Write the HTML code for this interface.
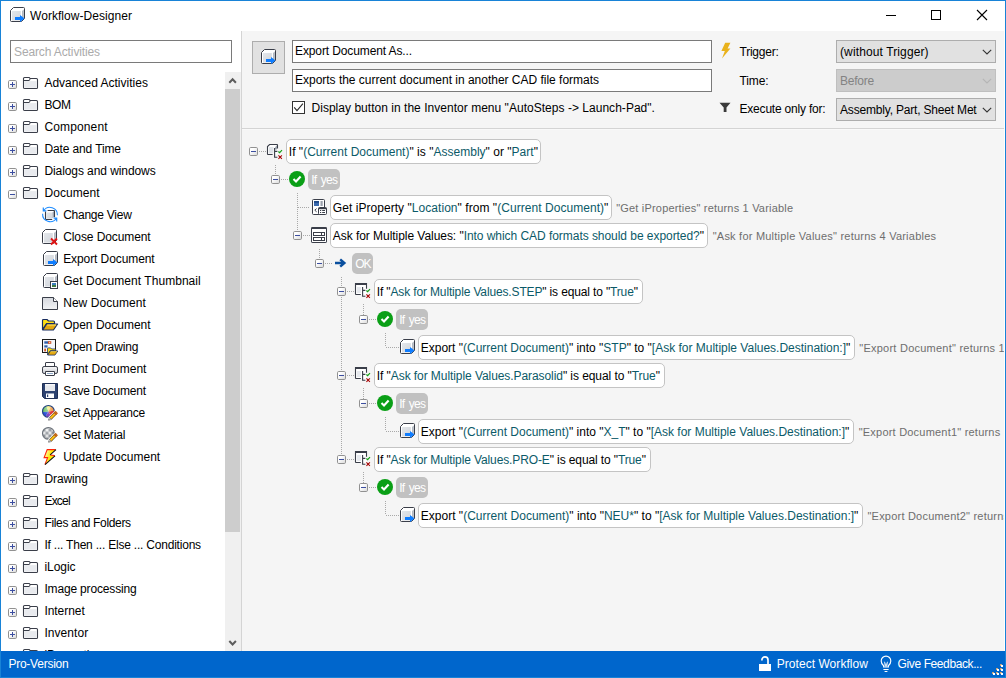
<!DOCTYPE html>
<html><head><meta charset="utf-8"><title>Workflow-Designer</title>
<style>
html,body{margin:0;padding:0}
body{width:1006px;height:678px;overflow:hidden;background:#fff;position:relative;font-family:"Liberation Sans",sans-serif;font-size:12px;color:#000}
.a{position:absolute}
.t{position:absolute;white-space:pre;line-height:16px;height:16px}
svg{position:absolute;overflow:visible}
.q{color:#0b5a68}
.box{position:absolute;height:23px;border:1px solid #c4c4c4;border-radius:5px;background:#fff}
.badge{position:absolute;height:21px;border-radius:5px;background:#c1c1c1}
.dh{position:absolute;height:1px;background-image:repeating-linear-gradient(90deg,#a9a9a9 0 1px,transparent 1px 2px)}
.dv{position:absolute;width:1px;background-image:repeating-linear-gradient(180deg,#a9a9a9 0 1px,transparent 1px 2px)}
.inp{position:absolute;height:21px;border:1px solid #7a7a7a;background:#fff}
.cmb{position:absolute;height:21px;width:158px;border:1px solid #adadad;background:#e1e1e1}
</style></head><body>
<svg width="0" height="0" style="left:0;top:0" aria-hidden="true"><defs><linearGradient id="gbox" x1="0" y1="0" x2="1" y2="1"><stop offset="0" stop-color="#e4e7eb"/><stop offset="1" stop-color="#d0d4da"/></linearGradient><linearGradient id="gex" x1="0" y1="0" x2="1" y2="1"><stop offset="0.3" stop-color="#fff"/><stop offset="1" stop-color="#d9d9d9"/></linearGradient><linearGradient id="gnew" x1="0" y1="0" x2="0" y2="1"><stop offset="0" stop-color="#d5d8de"/><stop offset="1" stop-color="#f2f3f5"/></linearGradient><linearGradient id="gpr" x1="0" y1="0" x2="0" y2="1"><stop offset="0" stop-color="#fafafa"/><stop offset="1" stop-color="#c9ccd2"/></linearGradient><radialGradient id="gap" cx="0.45" cy="0.25" r="0.75"><stop offset="0" stop-color="#fff" stop-opacity=".55"/><stop offset="0.7" stop-color="#fff" stop-opacity="0"/></radialGradient><pattern id="chk" width="6" height="6" patternUnits="userSpaceOnUse" patternTransform="translate(0.5 1.5)"><rect width="6" height="6" fill="#f2f3f4"/><rect width="3" height="3" fill="#8f949b"/><rect x="3" y="3" width="3" height="3" fill="#8f949b"/></pattern><radialGradient id="gmt" cx="0.4" cy="0.3" r="0.8"><stop offset="0" stop-color="#fff" stop-opacity=".3"/><stop offset="1" stop-color="#555" stop-opacity=".15"/></radialGradient><linearGradient id="gup" x1="0" y1="0" x2="1" y2="0.4"><stop offset="0.2" stop-color="#fff6a0"/><stop offset="0.6" stop-color="#ffe800"/></linearGradient></defs></svg>

<div class="a" style="left:0;top:0;width:1006px;height:678px;box-sizing:border-box;border:1px solid #1883d7"></div>
<svg style="left:9px;top:7px" width="16" height="16" viewBox="0 0 16 16" ><path d="M1.5 3.5 L4.5 0.5 H14.5 Q15.5 0.5 15.5 1.5 V11.5 L12.5 14.5 H2.5 Q1.5 14.5 1.5 13.5 Z" fill="#fff"/><rect x="3" y="4" width="8.8" height="9.5" fill="url(#gbox)"/><path d="M13.2 4 L14.7 2.5 V11 L13.2 12.3 Z" fill="#a2a9b4"/><path d="M1.5 3.5 L4.5 0.5 H14.5 Q15.5 0.5 15.5 1.5 V11.5 L12.5 14.5 H2.5 Q1.5 14.5 1.5 13.5 Z" fill="none" stroke="#3a3e49" stroke-width="1" stroke-linejoin="round"/><path d="M6 10H11V8.1L15.5 11.5L11 14.9V13H6Z" fill="#0f7dff"/></svg>
<span id="t1" class="t" style="left:30px;top:7.5px;font-size:12px;color:#000;letter-spacing:0.051px;">Workflow-Designer</span>
<svg style="left:880px;top:0" width="126" height="31" viewBox="0 0 126 31"><g stroke="#000" stroke-width="1" fill="none" shape-rendering="crispEdges"><path d="M6 15.5H16"/><rect x="51.5" y="10.5" width="9" height="9"/></g><path d="M97 10L107 20M107 10L97 20" stroke="#000" stroke-width="1.1" fill="none"/></svg>
<div class="inp" style="left:10px;top:40px;width:220px"></div>
<span id="t2" class="t" style="left:14px;top:43.5px;font-size:12px;color:#ababab;letter-spacing:-0.120px;">Search Activities</span>
<div class="a" style="left:225px;top:72px;width:16px;height:579px;background:#f0f0f0"></div>
<div class="a" style="left:225px;top:89px;width:15px;height:443px;background:#cdcdcd"></div>
<svg style="left:225px;top:72px" width="16" height="17" viewBox="0 0 16 17"><path d="M4.3 10.8L7.6 7.3L10.9 10.8" stroke="#5c5c5c" stroke-width="2" fill="none"/></svg>
<svg style="left:225px;top:634px" width="16" height="17" viewBox="0 0 16 17"><path d="M4.3 7L7.6 10.5L10.9 7" stroke="#5c5c5c" stroke-width="2" fill="none"/></svg>
<svg style="left:8px;top:80px" width="9" height="9" viewBox="0 0 9 9" ><rect x="0.5" y="0.5" width="8" height="8" rx="1.2" fill="url(#gex)" stroke="#919191"/><path d="M2 4.5H7" stroke="#3c4ea0" stroke-width="1" shape-rendering="crispEdges"/><path d="M4.5 2V7" stroke="#3c4ea0" stroke-width="1" shape-rendering="crispEdges"/></svg>
<svg style="left:23px;top:77px" width="15" height="12" viewBox="0 0 15 12" ><path d="M0.5 1.6Q0.5 0.5 1.6 0.5H5.8Q6.8 0.5 6.9 1.5H13.4Q14.5 1.5 14.5 2.6V10.4Q14.5 11.5 13.4 11.5H1.6Q0.5 11.5 0.5 10.4Z" fill="#fff" stroke="#3a3e49" stroke-width="1.1" stroke-linejoin="round"/><rect x="1.3" y="4.1" width="12.4" height="6.6" fill="#e8eaee"/><path d="M0.8 3.5H6.2Q6.9 3.5 6.9 2" fill="none" stroke="#3a3e49" stroke-width="1"/></svg>
<span id="t3" class="t" style="left:44.4px;top:75px;font-size:12px;color:#000;letter-spacing:0.006px;">Advanced Activities</span>
<svg style="left:8px;top:102px" width="9" height="9" viewBox="0 0 9 9" ><rect x="0.5" y="0.5" width="8" height="8" rx="1.2" fill="url(#gex)" stroke="#919191"/><path d="M2 4.5H7" stroke="#3c4ea0" stroke-width="1" shape-rendering="crispEdges"/><path d="M4.5 2V7" stroke="#3c4ea0" stroke-width="1" shape-rendering="crispEdges"/></svg>
<svg style="left:23px;top:99px" width="15" height="12" viewBox="0 0 15 12" ><path d="M0.5 1.6Q0.5 0.5 1.6 0.5H5.8Q6.8 0.5 6.9 1.5H13.4Q14.5 1.5 14.5 2.6V10.4Q14.5 11.5 13.4 11.5H1.6Q0.5 11.5 0.5 10.4Z" fill="#fff" stroke="#3a3e49" stroke-width="1.1" stroke-linejoin="round"/><rect x="1.3" y="4.1" width="12.4" height="6.6" fill="#e8eaee"/><path d="M0.8 3.5H6.2Q6.9 3.5 6.9 2" fill="none" stroke="#3a3e49" stroke-width="1"/></svg>
<span id="t4" class="t" style="left:44.4px;top:97px;font-size:12px;color:#000;letter-spacing:-0.381px;">BOM</span>
<svg style="left:8px;top:124px" width="9" height="9" viewBox="0 0 9 9" ><rect x="0.5" y="0.5" width="8" height="8" rx="1.2" fill="url(#gex)" stroke="#919191"/><path d="M2 4.5H7" stroke="#3c4ea0" stroke-width="1" shape-rendering="crispEdges"/><path d="M4.5 2V7" stroke="#3c4ea0" stroke-width="1" shape-rendering="crispEdges"/></svg>
<svg style="left:23px;top:121px" width="15" height="12" viewBox="0 0 15 12" ><path d="M0.5 1.6Q0.5 0.5 1.6 0.5H5.8Q6.8 0.5 6.9 1.5H13.4Q14.5 1.5 14.5 2.6V10.4Q14.5 11.5 13.4 11.5H1.6Q0.5 11.5 0.5 10.4Z" fill="#fff" stroke="#3a3e49" stroke-width="1.1" stroke-linejoin="round"/><rect x="1.3" y="4.1" width="12.4" height="6.6" fill="#e8eaee"/><path d="M0.8 3.5H6.2Q6.9 3.5 6.9 2" fill="none" stroke="#3a3e49" stroke-width="1"/></svg>
<span id="t5" class="t" style="left:44.4px;top:119px;font-size:12px;color:#000;letter-spacing:0.139px;">Component</span>
<svg style="left:8px;top:146px" width="9" height="9" viewBox="0 0 9 9" ><rect x="0.5" y="0.5" width="8" height="8" rx="1.2" fill="url(#gex)" stroke="#919191"/><path d="M2 4.5H7" stroke="#3c4ea0" stroke-width="1" shape-rendering="crispEdges"/><path d="M4.5 2V7" stroke="#3c4ea0" stroke-width="1" shape-rendering="crispEdges"/></svg>
<svg style="left:23px;top:143px" width="15" height="12" viewBox="0 0 15 12" ><path d="M0.5 1.6Q0.5 0.5 1.6 0.5H5.8Q6.8 0.5 6.9 1.5H13.4Q14.5 1.5 14.5 2.6V10.4Q14.5 11.5 13.4 11.5H1.6Q0.5 11.5 0.5 10.4Z" fill="#fff" stroke="#3a3e49" stroke-width="1.1" stroke-linejoin="round"/><rect x="1.3" y="4.1" width="12.4" height="6.6" fill="#e8eaee"/><path d="M0.8 3.5H6.2Q6.9 3.5 6.9 2" fill="none" stroke="#3a3e49" stroke-width="1"/></svg>
<span id="t6" class="t" style="left:44.4px;top:141px;font-size:12px;color:#000;letter-spacing:-0.119px;">Date and Time</span>
<svg style="left:8px;top:168px" width="9" height="9" viewBox="0 0 9 9" ><rect x="0.5" y="0.5" width="8" height="8" rx="1.2" fill="url(#gex)" stroke="#919191"/><path d="M2 4.5H7" stroke="#3c4ea0" stroke-width="1" shape-rendering="crispEdges"/><path d="M4.5 2V7" stroke="#3c4ea0" stroke-width="1" shape-rendering="crispEdges"/></svg>
<svg style="left:23px;top:165px" width="15" height="12" viewBox="0 0 15 12" ><path d="M0.5 1.6Q0.5 0.5 1.6 0.5H5.8Q6.8 0.5 6.9 1.5H13.4Q14.5 1.5 14.5 2.6V10.4Q14.5 11.5 13.4 11.5H1.6Q0.5 11.5 0.5 10.4Z" fill="#fff" stroke="#3a3e49" stroke-width="1.1" stroke-linejoin="round"/><rect x="1.3" y="4.1" width="12.4" height="6.6" fill="#e8eaee"/><path d="M0.8 3.5H6.2Q6.9 3.5 6.9 2" fill="none" stroke="#3a3e49" stroke-width="1"/></svg>
<span id="t7" class="t" style="left:44.4px;top:163px;font-size:12px;color:#000;letter-spacing:-0.081px;">Dialogs and windows</span>
<svg style="left:8px;top:190px" width="9" height="9" viewBox="0 0 9 9" ><rect x="0.5" y="0.5" width="8" height="8" rx="1.2" fill="url(#gex)" stroke="#919191"/><path d="M2 4.5H7" stroke="#3c4ea0" stroke-width="1" shape-rendering="crispEdges"/></svg>
<svg style="left:23px;top:187px" width="15" height="12" viewBox="0 0 15 12" ><path d="M0.5 1.6Q0.5 0.5 1.6 0.5H5.8Q6.8 0.5 6.9 1.5H13.4Q14.5 1.5 14.5 2.6V10.4Q14.5 11.5 13.4 11.5H1.6Q0.5 11.5 0.5 10.4Z" fill="#fff" stroke="#3a3e49" stroke-width="1.1" stroke-linejoin="round"/><rect x="1.3" y="4.1" width="12.4" height="6.6" fill="#e8eaee"/><path d="M0.8 3.5H6.2Q6.9 3.5 6.9 2" fill="none" stroke="#3a3e49" stroke-width="1"/></svg>
<span id="t8" class="t" style="left:44.4px;top:185px;font-size:12px;color:#000;letter-spacing:0.075px;">Document</span>
<svg style="left:42px;top:207px" width="16" height="16" viewBox="0 0 16 16" ><path d="M3.5 5.5L5.5 3.5H12.5V10.5L10.5 12.5H3.5Z" fill="#fff"/><rect x="4.5" y="5.5" width="5.5" height="6.2" fill="url(#gbox)"/><path d="M10.4 5.6L12 4V9.8L10.4 11.4Z" fill="#a2a9b4"/><path d="M5.6 3.5H12Q12.5 3.5 12.5 4V10.2M3.5 4.6V12Q3.5 12.5 4 12.5H10.2" fill="none" stroke="#3a3e49" stroke-width="1.1"/><path d="M1.6 3.8A7.5 7.5 0 0 1 15.4 8.2" stroke="#1e8cff" stroke-width="1.1" fill="none"/><path d="M14.4 11.2A7.5 7.5 0 0 1 0.6 6.8" stroke="#1e8cff" stroke-width="1.1" fill="none"/><path d="M1.3 0.6V3.8H4.4" fill="none" stroke="#1e8cff" stroke-width="1.2"/><path d="M1.3 1.6V3.8H3.4Z" fill="#1e8cff"/><path d="M14.7 14.4V11.2H11.6" fill="none" stroke="#1e8cff" stroke-width="1.2"/><path d="M14.7 13.4V11.2H12.6Z" fill="#1e8cff"/></svg>
<span id="t9" class="t" style="left:63.2px;top:207px;font-size:12px;color:#000;letter-spacing:-0.252px;">Change View</span>
<svg style="left:42px;top:229px" width="16" height="16" viewBox="0 0 16 16" ><path d="M0.5 3.5 L3.5 0.5 H13.5 Q14.5 0.5 14.5 1.5 V11.5 L11.5 14.5 H1.5 Q0.5 14.5 0.5 13.5 Z" fill="#fff"/><rect x="2" y="4" width="8.8" height="9.5" fill="url(#gbox)"/><path d="M12.2 4 L13.7 2.5 V11 L12.2 12.3 Z" fill="#a2a9b4"/><path d="M0.5 3.5 L3.5 0.5 H13.5 Q14.5 0.5 14.5 1.5 V11.5 L11.5 14.5 H1.5 Q0.5 14.5 0.5 13.5 Z" fill="none" stroke="#3a3e49" stroke-width="1" stroke-linejoin="round"/><path d="M9 9.5L15 15.5M15 9.5L9 15.5" stroke="#e01414" stroke-width="1.9" fill="none"/></svg>
<span id="t10" class="t" style="left:63.2px;top:229px;font-size:12px;color:#000;letter-spacing:-0.094px;">Close Document</span>
<svg style="left:42px;top:251px" width="16" height="16" viewBox="0 0 16 16" ><path d="M1.5 3.5 L4.5 0.5 H14.5 Q15.5 0.5 15.5 1.5 V11.5 L12.5 14.5 H2.5 Q1.5 14.5 1.5 13.5 Z" fill="#fff"/><rect x="3" y="4" width="8.8" height="9.5" fill="url(#gbox)"/><path d="M13.2 4 L14.7 2.5 V11 L13.2 12.3 Z" fill="#a2a9b4"/><path d="M1.5 3.5 L4.5 0.5 H14.5 Q15.5 0.5 15.5 1.5 V11.5 L12.5 14.5 H2.5 Q1.5 14.5 1.5 13.5 Z" fill="none" stroke="#3a3e49" stroke-width="1" stroke-linejoin="round"/><path d="M6 10H11V8.1L15.5 11.5L11 14.9V13H6Z" fill="#0f7dff"/></svg>
<span id="t11" class="t" style="left:63.2px;top:251px;font-size:12px;color:#000;letter-spacing:-0.088px;">Export Document</span>
<svg style="left:42px;top:273px" width="16" height="16" viewBox="0 0 16 16" ><path d="M1.5 3.5 L4.5 0.5 H14.5 Q15.5 0.5 15.5 1.5 V11.5 L12.5 14.5 H2.5 Q1.5 14.5 1.5 13.5 Z" fill="#fff"/><rect x="3" y="4" width="8.8" height="9.5" fill="url(#gbox)"/><path d="M13.2 4 L14.7 2.5 V11 L13.2 12.3 Z" fill="#a2a9b4"/><path d="M1.5 3.5 L4.5 0.5 H14.5 Q15.5 0.5 15.5 1.5 V11.5 L12.5 14.5 H2.5 Q1.5 14.5 1.5 13.5 Z" fill="none" stroke="#3a3e49" stroke-width="1" stroke-linejoin="round"/><rect x="8.5" y="8.5" width="7" height="7" fill="#fff" stroke="#3a3e49"/><rect x="10" y="10" width="4" height="4" fill="#3f7fbf"/><rect x="10" y="12" width="4" height="2" fill="#3d7a45"/></svg>
<span id="t12" class="t" style="left:63.2px;top:273px;font-size:12px;color:#000;letter-spacing:0.049px;">Get Document Thumbnail</span>
<svg style="left:42px;top:295px" width="16" height="16" viewBox="0 0 16 16" ><path d="M0.5 2.5H11.5L15.5 6.5V14.5H0.5Z" fill="url(#gnew)" stroke="#3a3e49" stroke-linejoin="round"/><path d="M11.5 2.5V6.5H15.5" fill="#fff" stroke="#3a3e49" stroke-linejoin="round"/></svg>
<span id="t13" class="t" style="left:63.2px;top:295px;font-size:12px;color:#000;letter-spacing:0.047px;">New Document</span>
<svg style="left:42px;top:317px" width="16" height="16" viewBox="0 0 16 16" ><g transform="translate(0 2) scale(1)"><path d="M0.5 10.5V1.5Q0.5 0.5 1.5 0.5H5L6.5 2H11.5Q12.5 2 12.5 3V4.5H4.5L0.5 10.5Z" fill="#ffe014" stroke="#182c60" stroke-width="1.15" stroke-linejoin="round"/><path d="M0.8 11L4.6 5H15.6L11.4 11Z" fill="#e4a80e" stroke="#182c60" stroke-width="1.15" stroke-linejoin="round"/><path d="M5.2 6H14.2" stroke="#ffe66a" stroke-width="1"/></g></svg>
<span id="t14" class="t" style="left:63.2px;top:317px;font-size:12px;color:#000;letter-spacing:0.001px;">Open Document</span>
<svg style="left:42px;top:339px" width="16" height="16" viewBox="0 0 16 16" ><rect x="0.5" y="0.5" width="13" height="13" fill="#f4f7fb" stroke="#1a1a1a"/><rect x="2.3" y="2.3" width="4" height="2.4" fill="#2f5fa8"/><rect x="6.4" y="2.7" width="2.4" height="1.6" fill="#fff" stroke="#cc4414" stroke-width="0.9"/><rect x="2.3" y="6.3" width="3.2" height="2.2" fill="#2f5fa8"/><rect x="2.3" y="9.6" width="1.6" height="2.8" fill="#cc4414"/><g transform="translate(5.2 8.6) scale(0.68)"><path d="M0.5 10.5V1.5Q0.5 0.5 1.5 0.5H5L6.5 2H11.5Q12.5 2 12.5 3V4.5H4.5L0.5 10.5Z" fill="#ffe014" stroke="#182c60" stroke-width="1.15" stroke-linejoin="round"/><path d="M0.8 11L4.6 5H15.6L11.4 11Z" fill="#e4a80e" stroke="#182c60" stroke-width="1.15" stroke-linejoin="round"/><path d="M5.2 6H14.2" stroke="#ffe66a" stroke-width="1"/></g></svg>
<span id="t15" class="t" style="left:63.2px;top:339px;font-size:12px;color:#000;letter-spacing:-0.135px;">Open Drawing</span>
<svg style="left:42px;top:361px" width="16" height="16" viewBox="0 0 16 16" ><path d="M3.5 6V2Q3.5 1.5 4 1.5H12Q12.5 1.5 12.5 2V6" fill="#fff" stroke="#3a3e49"/><rect x="0.5" y="5.5" width="15" height="7" rx="1.6" fill="url(#gpr)" stroke="#3a3e49"/><path d="M3.5 10.5H12.5V14Q12.5 14.5 12 14.5H4Q3.5 14.5 3.5 14Z" fill="#fff" stroke="#3a3e49"/><path d="M5 12.5H11" stroke="#8fa8c8" stroke-width="1"/></svg>
<span id="t16" class="t" style="left:63.2px;top:361px;font-size:12px;color:#000;letter-spacing:0.043px;">Print Document</span>
<svg style="left:42px;top:383px" width="16" height="16" viewBox="0 0 16 16" ><path d="M0.5 0.5H15.5V15.5H2.5L0.5 13.5Z" fill="#2d4270" stroke="#1f2f55" stroke-linejoin="round"/><rect x="3" y="1" width="10" height="7" fill="#e6e8ec"/><rect x="3" y="1" width="10" height="1.4" fill="#f8f8fa"/><rect x="4" y="10.5" width="8" height="4.5" fill="#fff"/><rect x="5" y="11.5" width="1.2" height="2.5" fill="#2d4270"/></svg>
<span id="t17" class="t" style="left:63.2px;top:383px;font-size:12px;color:#000;letter-spacing:-0.215px;">Save Document</span>
<svg style="left:42px;top:405px" width="17" height="18" viewBox="0 0 17 18" ><clipPath id="cpa"><circle cx="6.4" cy="6.4" r="5.9"/></clipPath><g clip-path="url(#cpa)"><path d="M6.4 6.4L3 -2L10.5 -2Z" fill="#f0e24c"/><path d="M6.4 6.4L10.5 -2L16 5Z" fill="#f09030"/><path d="M6.4 6.4L16 5L12 16Z" fill="#e02c2c"/><path d="M6.4 6.4L12 16L1 16Z" fill="#8048c0"/><path d="M6.4 6.4L1 16L-3 6.4Z" fill="#2c50d4"/><path d="M6.4 6.4L-3 7.4L3 -2Z" fill="#58b850"/><circle cx="6.4" cy="6.4" r="6" fill="url(#gap)"/></g><circle cx="6.4" cy="6.4" r="5.9" fill="none" stroke="#1f3f7f" stroke-width="1.1"/><g transform="translate(-0.3 -0.9)"><path d="M7.6 15.4L15.2 7.8" stroke="#fff" stroke-width="4.6" fill="none"/><path d="M8.8 14.2L14.4 8.6" stroke="#6e4e1c" stroke-width="3.2" fill="none"/><path d="M8.6 14.4L13.4 9.6" stroke="#ffc414" stroke-width="1.9" fill="none"/><path d="M12.9 10.1L15.1 7.9" stroke="#d8741e" stroke-width="3.2" fill="none"/><path d="M13.5 9.5L13.9 9.1M14.4 8.6L14.8 8.2" stroke="#8a4a14" stroke-width="3.2" fill="none" opacity=".6"/><path d="M6.9 16.1L7.6 13.3L9.7 15.4Z" fill="#fff" stroke="#555" stroke-width="0.6" stroke-linejoin="round"/><path d="M6.9 16.1L7.2 15.1L7.9 15.8Z" fill="#333"/></g></svg>
<span id="t18" class="t" style="left:63.2px;top:405px;font-size:12px;color:#000;letter-spacing:-0.272px;">Set Appearance</span>
<svg style="left:42px;top:427px" width="17" height="18" viewBox="0 0 17 18" ><circle cx="6.4" cy="6.4" r="5.9" fill="url(#chk)"/><circle cx="6.4" cy="6.4" r="5.9" fill="url(#gmt)" stroke="#6a7078" stroke-width="1.1"/><g transform="translate(-0.3 -0.9)"><path d="M7.6 15.4L15.2 7.8" stroke="#fff" stroke-width="4.6" fill="none"/><path d="M8.8 14.2L14.4 8.6" stroke="#6e4e1c" stroke-width="3.2" fill="none"/><path d="M8.6 14.4L13.4 9.6" stroke="#ffc414" stroke-width="1.9" fill="none"/><path d="M12.9 10.1L15.1 7.9" stroke="#d8741e" stroke-width="3.2" fill="none"/><path d="M13.5 9.5L13.9 9.1M14.4 8.6L14.8 8.2" stroke="#8a4a14" stroke-width="3.2" fill="none" opacity=".6"/><path d="M6.9 16.1L7.6 13.3L9.7 15.4Z" fill="#fff" stroke="#555" stroke-width="0.6" stroke-linejoin="round"/><path d="M6.9 16.1L7.2 15.1L7.9 15.8Z" fill="#333"/></g></svg>
<span id="t19" class="t" style="left:63.2px;top:427px;font-size:12px;color:#000;letter-spacing:-0.169px;">Set Material</span>
<svg style="left:42px;top:449px" width="16" height="16" viewBox="0 0 16 16" ><path d="M5.2 0.5H13.8L7.9 5.9L12.9 6.6L2.9 15.7L5.6 8.6H2.1Z" fill="url(#gup)"/><path d="M13.6 0.6H5.2L2.1 8.6H5.6L3 15.4M8.2 6L12.8 6.6" fill="none" stroke="#ff2408" stroke-width="1.1" stroke-linejoin="miter"/><path d="M14 0.6L8.1 5.8M13 6.8L3 15.7" fill="none" stroke="#141414" stroke-width="1.1"/></svg>
<span id="t20" class="t" style="left:63.2px;top:449px;font-size:12px;color:#000;letter-spacing:0.018px;">Update Document</span>
<svg style="left:8px;top:476px" width="9" height="9" viewBox="0 0 9 9" ><rect x="0.5" y="0.5" width="8" height="8" rx="1.2" fill="url(#gex)" stroke="#919191"/><path d="M2 4.5H7" stroke="#3c4ea0" stroke-width="1" shape-rendering="crispEdges"/><path d="M4.5 2V7" stroke="#3c4ea0" stroke-width="1" shape-rendering="crispEdges"/></svg>
<svg style="left:23px;top:473px" width="15" height="12" viewBox="0 0 15 12" ><path d="M0.5 1.6Q0.5 0.5 1.6 0.5H5.8Q6.8 0.5 6.9 1.5H13.4Q14.5 1.5 14.5 2.6V10.4Q14.5 11.5 13.4 11.5H1.6Q0.5 11.5 0.5 10.4Z" fill="#fff" stroke="#3a3e49" stroke-width="1.1" stroke-linejoin="round"/><rect x="1.3" y="4.1" width="12.4" height="6.6" fill="#e8eaee"/><path d="M0.8 3.5H6.2Q6.9 3.5 6.9 2" fill="none" stroke="#3a3e49" stroke-width="1"/></svg>
<span id="t21" class="t" style="left:44.4px;top:471px;font-size:12px;color:#000;letter-spacing:-0.088px;">Drawing</span>
<svg style="left:8px;top:498px" width="9" height="9" viewBox="0 0 9 9" ><rect x="0.5" y="0.5" width="8" height="8" rx="1.2" fill="url(#gex)" stroke="#919191"/><path d="M2 4.5H7" stroke="#3c4ea0" stroke-width="1" shape-rendering="crispEdges"/><path d="M4.5 2V7" stroke="#3c4ea0" stroke-width="1" shape-rendering="crispEdges"/></svg>
<svg style="left:23px;top:495px" width="15" height="12" viewBox="0 0 15 12" ><path d="M0.5 1.6Q0.5 0.5 1.6 0.5H5.8Q6.8 0.5 6.9 1.5H13.4Q14.5 1.5 14.5 2.6V10.4Q14.5 11.5 13.4 11.5H1.6Q0.5 11.5 0.5 10.4Z" fill="#fff" stroke="#3a3e49" stroke-width="1.1" stroke-linejoin="round"/><rect x="1.3" y="4.1" width="12.4" height="6.6" fill="#e8eaee"/><path d="M0.8 3.5H6.2Q6.9 3.5 6.9 2" fill="none" stroke="#3a3e49" stroke-width="1"/></svg>
<span id="t22" class="t" style="left:44.4px;top:493px;font-size:12px;color:#000;letter-spacing:-0.769px;">Excel</span>
<svg style="left:8px;top:520px" width="9" height="9" viewBox="0 0 9 9" ><rect x="0.5" y="0.5" width="8" height="8" rx="1.2" fill="url(#gex)" stroke="#919191"/><path d="M2 4.5H7" stroke="#3c4ea0" stroke-width="1" shape-rendering="crispEdges"/><path d="M4.5 2V7" stroke="#3c4ea0" stroke-width="1" shape-rendering="crispEdges"/></svg>
<svg style="left:23px;top:517px" width="15" height="12" viewBox="0 0 15 12" ><path d="M0.5 1.6Q0.5 0.5 1.6 0.5H5.8Q6.8 0.5 6.9 1.5H13.4Q14.5 1.5 14.5 2.6V10.4Q14.5 11.5 13.4 11.5H1.6Q0.5 11.5 0.5 10.4Z" fill="#fff" stroke="#3a3e49" stroke-width="1.1" stroke-linejoin="round"/><rect x="1.3" y="4.1" width="12.4" height="6.6" fill="#e8eaee"/><path d="M0.8 3.5H6.2Q6.9 3.5 6.9 2" fill="none" stroke="#3a3e49" stroke-width="1"/></svg>
<span id="t23" class="t" style="left:44.4px;top:515px;font-size:12px;color:#000;letter-spacing:-0.332px;">Files and Folders</span>
<svg style="left:8px;top:542px" width="9" height="9" viewBox="0 0 9 9" ><rect x="0.5" y="0.5" width="8" height="8" rx="1.2" fill="url(#gex)" stroke="#919191"/><path d="M2 4.5H7" stroke="#3c4ea0" stroke-width="1" shape-rendering="crispEdges"/><path d="M4.5 2V7" stroke="#3c4ea0" stroke-width="1" shape-rendering="crispEdges"/></svg>
<svg style="left:23px;top:539px" width="15" height="12" viewBox="0 0 15 12" ><path d="M0.5 1.6Q0.5 0.5 1.6 0.5H5.8Q6.8 0.5 6.9 1.5H13.4Q14.5 1.5 14.5 2.6V10.4Q14.5 11.5 13.4 11.5H1.6Q0.5 11.5 0.5 10.4Z" fill="#fff" stroke="#3a3e49" stroke-width="1.1" stroke-linejoin="round"/><rect x="1.3" y="4.1" width="12.4" height="6.6" fill="#e8eaee"/><path d="M0.8 3.5H6.2Q6.9 3.5 6.9 2" fill="none" stroke="#3a3e49" stroke-width="1"/></svg>
<span id="t24" class="t" style="left:44.4px;top:537px;font-size:12px;color:#000;letter-spacing:-0.210px;">If ... Then ... Else ... Conditions</span>
<svg style="left:8px;top:564px" width="9" height="9" viewBox="0 0 9 9" ><rect x="0.5" y="0.5" width="8" height="8" rx="1.2" fill="url(#gex)" stroke="#919191"/><path d="M2 4.5H7" stroke="#3c4ea0" stroke-width="1" shape-rendering="crispEdges"/><path d="M4.5 2V7" stroke="#3c4ea0" stroke-width="1" shape-rendering="crispEdges"/></svg>
<svg style="left:23px;top:561px" width="15" height="12" viewBox="0 0 15 12" ><path d="M0.5 1.6Q0.5 0.5 1.6 0.5H5.8Q6.8 0.5 6.9 1.5H13.4Q14.5 1.5 14.5 2.6V10.4Q14.5 11.5 13.4 11.5H1.6Q0.5 11.5 0.5 10.4Z" fill="#fff" stroke="#3a3e49" stroke-width="1.1" stroke-linejoin="round"/><rect x="1.3" y="4.1" width="12.4" height="6.6" fill="#e8eaee"/><path d="M0.8 3.5H6.2Q6.9 3.5 6.9 2" fill="none" stroke="#3a3e49" stroke-width="1"/></svg>
<span id="t25" class="t" style="left:44.4px;top:559px;font-size:12px;color:#000;letter-spacing:-0.027px;">iLogic</span>
<svg style="left:8px;top:586px" width="9" height="9" viewBox="0 0 9 9" ><rect x="0.5" y="0.5" width="8" height="8" rx="1.2" fill="url(#gex)" stroke="#919191"/><path d="M2 4.5H7" stroke="#3c4ea0" stroke-width="1" shape-rendering="crispEdges"/><path d="M4.5 2V7" stroke="#3c4ea0" stroke-width="1" shape-rendering="crispEdges"/></svg>
<svg style="left:23px;top:583px" width="15" height="12" viewBox="0 0 15 12" ><path d="M0.5 1.6Q0.5 0.5 1.6 0.5H5.8Q6.8 0.5 6.9 1.5H13.4Q14.5 1.5 14.5 2.6V10.4Q14.5 11.5 13.4 11.5H1.6Q0.5 11.5 0.5 10.4Z" fill="#fff" stroke="#3a3e49" stroke-width="1.1" stroke-linejoin="round"/><rect x="1.3" y="4.1" width="12.4" height="6.6" fill="#e8eaee"/><path d="M0.8 3.5H6.2Q6.9 3.5 6.9 2" fill="none" stroke="#3a3e49" stroke-width="1"/></svg>
<span id="t26" class="t" style="left:44.4px;top:581px;font-size:12px;color:#000;letter-spacing:-0.164px;">Image processing</span>
<svg style="left:8px;top:608px" width="9" height="9" viewBox="0 0 9 9" ><rect x="0.5" y="0.5" width="8" height="8" rx="1.2" fill="url(#gex)" stroke="#919191"/><path d="M2 4.5H7" stroke="#3c4ea0" stroke-width="1" shape-rendering="crispEdges"/><path d="M4.5 2V7" stroke="#3c4ea0" stroke-width="1" shape-rendering="crispEdges"/></svg>
<svg style="left:23px;top:605px" width="15" height="12" viewBox="0 0 15 12" ><path d="M0.5 1.6Q0.5 0.5 1.6 0.5H5.8Q6.8 0.5 6.9 1.5H13.4Q14.5 1.5 14.5 2.6V10.4Q14.5 11.5 13.4 11.5H1.6Q0.5 11.5 0.5 10.4Z" fill="#fff" stroke="#3a3e49" stroke-width="1.1" stroke-linejoin="round"/><rect x="1.3" y="4.1" width="12.4" height="6.6" fill="#e8eaee"/><path d="M0.8 3.5H6.2Q6.9 3.5 6.9 2" fill="none" stroke="#3a3e49" stroke-width="1"/></svg>
<span id="t27" class="t" style="left:44.4px;top:603px;font-size:12px;color:#000;letter-spacing:-0.050px;">Internet</span>
<svg style="left:8px;top:630px" width="9" height="9" viewBox="0 0 9 9" ><rect x="0.5" y="0.5" width="8" height="8" rx="1.2" fill="url(#gex)" stroke="#919191"/><path d="M2 4.5H7" stroke="#3c4ea0" stroke-width="1" shape-rendering="crispEdges"/><path d="M4.5 2V7" stroke="#3c4ea0" stroke-width="1" shape-rendering="crispEdges"/></svg>
<svg style="left:23px;top:627px" width="15" height="12" viewBox="0 0 15 12" ><path d="M0.5 1.6Q0.5 0.5 1.6 0.5H5.8Q6.8 0.5 6.9 1.5H13.4Q14.5 1.5 14.5 2.6V10.4Q14.5 11.5 13.4 11.5H1.6Q0.5 11.5 0.5 10.4Z" fill="#fff" stroke="#3a3e49" stroke-width="1.1" stroke-linejoin="round"/><rect x="1.3" y="4.1" width="12.4" height="6.6" fill="#e8eaee"/><path d="M0.8 3.5H6.2Q6.9 3.5 6.9 2" fill="none" stroke="#3a3e49" stroke-width="1"/></svg>
<span id="t28" class="t" style="left:44.4px;top:625px;font-size:12px;color:#000;letter-spacing:0.055px;">Inventor</span>
<svg style="left:8px;top:652px" width="9" height="9" viewBox="0 0 9 9" ><rect x="0.5" y="0.5" width="8" height="8" rx="1.2" fill="url(#gex)" stroke="#919191"/><path d="M2 4.5H7" stroke="#3c4ea0" stroke-width="1" shape-rendering="crispEdges"/><path d="M4.5 2V7" stroke="#3c4ea0" stroke-width="1" shape-rendering="crispEdges"/></svg>
<svg style="left:23px;top:649px" width="15" height="12" viewBox="0 0 15 12" ><path d="M0.5 1.6Q0.5 0.5 1.6 0.5H5.8Q6.8 0.5 6.9 1.5H13.4Q14.5 1.5 14.5 2.6V10.4Q14.5 11.5 13.4 11.5H1.6Q0.5 11.5 0.5 10.4Z" fill="#fff" stroke="#3a3e49" stroke-width="1.1" stroke-linejoin="round"/><rect x="1.3" y="4.1" width="12.4" height="6.6" fill="#e8eaee"/><path d="M0.8 3.5H6.2Q6.9 3.5 6.9 2" fill="none" stroke="#3a3e49" stroke-width="1"/></svg>
<span id="t29" class="t" style="left:44.4px;top:647px;font-size:12px;color:#000;letter-spacing:0.058px;">iProperties</span>
<div class="a" style="left:241px;top:31px;width:763px;height:620px;background:#f5f5f5;border-left:1px solid #d4d4d4;box-sizing:border-box"></div>
<div class="a" style="left:242px;top:128px;width:762px;height:1px;background:#d4d4d4"></div><div class="a" style="left:242px;top:129px;width:762px;height:1px;background:#f9f9f9"></div>
<div class="a" style="left:252px;top:41px;width:31px;height:31px;border:1px solid #adadad;background:#e1e1e1"></div>
<svg style="left:260px;top:49px" width="16" height="16" viewBox="0 0 16 16" ><path d="M1.5 3.5 L4.5 0.5 H14.5 Q15.5 0.5 15.5 1.5 V11.5 L12.5 14.5 H2.5 Q1.5 14.5 1.5 13.5 Z" fill="#fff"/><rect x="3" y="4" width="8.8" height="9.5" fill="url(#gbox)"/><path d="M13.2 4 L14.7 2.5 V11 L13.2 12.3 Z" fill="#a2a9b4"/><path d="M1.5 3.5 L4.5 0.5 H14.5 Q15.5 0.5 15.5 1.5 V11.5 L12.5 14.5 H2.5 Q1.5 14.5 1.5 13.5 Z" fill="none" stroke="#3a3e49" stroke-width="1" stroke-linejoin="round"/><path d="M6 10H11V8.1L15.5 11.5L11 14.9V13H6Z" fill="#0f7dff"/></svg>
<div class="inp" style="left:292px;top:40px;width:418px"></div>
<span id="t30" class="t" style="left:295px;top:43px;font-size:12px;color:#000;letter-spacing:-0.114px;">Export Document As...</span>
<div class="inp" style="left:292px;top:69px;width:418px"></div>
<span id="t31" class="t" style="left:295px;top:72px;font-size:12px;color:#000;letter-spacing:-0.015px;">Exports the current document in another CAD file formats</span>
<svg style="left:292px;top:101px" width="13" height="13" viewBox="0 0 13 13"><rect x="0.5" y="0.5" width="12" height="12" fill="#fff" stroke="#333" shape-rendering="crispEdges"/><path d="M2.2 6.4L5 9.6L10.9 2.6" stroke="#2a2a2a" stroke-width="1.1" fill="none"/></svg>
<span id="t32" class="t" style="left:311.5px;top:100px;font-size:12px;color:#000;letter-spacing:0.028px;">Display button in the Inventor menu "AutoSteps -&gt; Launch-Pad".</span>
<svg style="left:720px;top:42px" width="11" height="17" viewBox="0 0 11 17" ><path d="M5.2 0.8H10.4L7.6 6.4H10.4L2 16.6L4.8 9H1.4Z" fill="#e9b21c"/></svg>
<span id="t33" class="t" style="left:739.5px;top:44px;font-size:12px;color:#000;letter-spacing:-0.238px;">Trigger:</span>
<span id="t34" class="t" style="left:739.5px;top:72.5px;font-size:12px;color:#000;letter-spacing:-0.113px;">Time:</span>
<svg style="left:719px;top:102px" width="12" height="11" viewBox="0 0 12 11" ><path d="M0.5 0.8H11.5L7.5 5.4V10H4.7V5.4Z" fill="#3a3a3a"/></svg>
<span id="t35" class="t" style="left:739.5px;top:101px;font-size:12px;color:#000;letter-spacing:-0.199px;">Execute only for:</span>
<div class="cmb" style="left:836px;top:40px"></div>
<span id="t36" class="t" style="left:840px;top:43.5px;font-size:12px;color:#000;letter-spacing:0.117px;">(without Trigger)</span>
<svg style="left:982px;top:49px" width="10" height="6" viewBox="0 0 10 6"><path d="M0.8 0.8L5 5L9.2 0.8" stroke="#333" stroke-width="1.1" fill="none"/></svg>
<div class="cmb" style="left:836px;top:69px;background:#cccccc;border-color:#bfbfbf"></div>
<span id="t37" class="t" style="left:840px;top:72.5px;font-size:12px;color:#838383;letter-spacing:-0.227px;">Before</span>
<svg style="left:982px;top:78px" width="10" height="6" viewBox="0 0 10 6"><path d="M0.8 0.8L5 5L9.2 0.8" stroke="#b5b5b5" stroke-width="1.1" fill="none"/></svg>
<div class="cmb" style="left:836px;top:98px"></div>
<div class="a" style="left:837px;top:99px;width:140px;height:21px;overflow:hidden"><span id="t38" class="t" style="left:3px;top:2.5px;font-size:12px;color:#000;letter-spacing:-0.186px;">Assembly, Part, Sheet Metal</span></div>
<svg style="left:982px;top:107px" width="10" height="6" viewBox="0 0 10 6"><path d="M0.8 0.8L5 5L9.2 0.8" stroke="#333" stroke-width="1.1" fill="none"/></svg>
<div class="a" style="left:242px;top:129px;width:762px;height:522px;overflow:hidden"><div class="a" style="left:-242px;top:-129px;width:1006px;height:678px">
<div class="dh" style="left:259px;top:151px;width:7px"></div>
<div class="dv" style="left:275px;top:165px;height:10px"></div>
<div class="dh" style="left:281px;top:179px;width:8px"></div>
<div class="dv" style="left:297px;top:193px;height:38px"></div>
<div class="dh" style="left:298px;top:207px;width:12px"></div>
<div class="dh" style="left:303px;top:235px;width:7px"></div>
<div class="dv" style="left:319px;top:249px;height:10px"></div>
<div class="dh" style="left:325px;top:263px;width:8px"></div>
<div class="dv" style="left:341px;top:277px;height:178px"></div>
<div class="dh" style="left:347px;top:291px;width:7px"></div>
<div class="dh" style="left:347px;top:375px;width:7px"></div>
<div class="dh" style="left:347px;top:459px;width:7px"></div>
<div class="dv" style="left:363px;top:304px;height:11px"></div>
<div class="dh" style="left:369px;top:319px;width:8px"></div>
<div class="dv" style="left:385px;top:333px;height:14px"></div>
<div class="dh" style="left:386px;top:347px;width:13px"></div>
<div class="dv" style="left:363px;top:388px;height:11px"></div>
<div class="dh" style="left:369px;top:403px;width:8px"></div>
<div class="dv" style="left:385px;top:417px;height:14px"></div>
<div class="dh" style="left:386px;top:431px;width:13px"></div>
<div class="dv" style="left:363px;top:472px;height:11px"></div>
<div class="dh" style="left:369px;top:487px;width:8px"></div>
<div class="dv" style="left:385px;top:501px;height:14px"></div>
<div class="dh" style="left:386px;top:515px;width:13px"></div>
<svg style="left:249px;top:147px" width="9" height="9" viewBox="0 0 9 9" ><rect x="0.5" y="0.5" width="8" height="8" rx="1.2" fill="url(#gex)" stroke="#919191"/><path d="M2 4.5H7" stroke="#3c4ea0" stroke-width="1" shape-rendering="crispEdges"/></svg>
<svg style="left:266px;top:143px" width="18" height="18" viewBox="0 0 18 18" ><g transform="translate(1 1)"><path d="M0.5 2.5L2.5 0.5H10.5V10.5H0.5Z" fill="#fff"/><rect x="2" y="3" width="4.5" height="6.5" fill="#dfe3e8"/><path d="M8 3.2L10 1.2V5.6L8 5.6Z" fill="#a2a9b4"/><path d="M10.5 4.6V1Q10.5 0.5 10 0.5H2.6L0.5 2.6V10Q0.5 10.5 1 10.5H5.6" fill="none" stroke="#3a3e49" stroke-width="1.1"/></g><g transform="translate(1 1)"><path d="M7.6 4V13.3H10.4M7.6 7.4H10.4" fill="none" stroke="#3a3e49" stroke-width="1.1"/><path d="M11.4 7.5L12.6 8.7L15 6.2" fill="none" stroke="#12a012" stroke-width="1.15"/><path d="M11.4 11.3L14.9 14.8M14.9 11.3L11.4 14.8" fill="none" stroke="#a80808" stroke-width="1.05"/><rect x="12.4" y="12.3" width="1.5" height="1.5" fill="#a80808"/></g></svg>
<div class="box" style="left:286px;top:139px;width:253px"></div><span id="t39" class="t" style="left:288.8px;top:143.5px;font-size:12px;color:#000;letter-spacing:0.017px;">If "<span class="q">(Current Document)</span>" is "<span class="q">Assembly</span>" or "<span class="q">Part</span>"</span>
<svg style="left:271px;top:175px" width="9" height="9" viewBox="0 0 9 9" ><rect x="0.5" y="0.5" width="8" height="8" rx="1.2" fill="url(#gex)" stroke="#919191"/><path d="M2 4.5H7" stroke="#3c4ea0" stroke-width="1" shape-rendering="crispEdges"/></svg>
<svg style="left:289px;top:171px" width="16" height="16" viewBox="0 0 16 16" ><circle cx="8" cy="8" r="8" fill="#0a9f16"/><path d="M4.5 8.1L7 10.5L11.6 5.5" fill="none" stroke="#fff" stroke-width="2.1"/></svg>
<div class="badge" style="left:308px;top:169px;width:32px"></div><span id="t40" class="t" style="left:311.2px;top:171.5px;font-size:12px;color:#fff;letter-spacing:-0.648px;word-spacing:1.5px;">If yes</span>
<svg style="left:311px;top:199px" width="17" height="16" viewBox="0 0 17 16" ><rect x="1.5" y="0.5" width="12" height="15" rx="1" fill="#fff" stroke="#3a3e49"/><rect x="3" y="2" width="5" height="5" fill="#3a69ad"/><rect x="3" y="2" width="5" height="1.8" fill="#1f4a88"/><rect x="9.5" y="2" width="2.2" height="5" fill="#9aa0ac"/><path d="M5.6 9.6L3.8 11.2L5.6 12.8" fill="none" stroke="#3a3e49" stroke-width="1"/><rect x="7.5" y="8.5" width="8" height="7" rx="1" fill="#fff" stroke="#3a3e49"/><path d="M7.5 9.5H15.5" stroke="#3a3e49" stroke-width="1.4"/><path d="M9 11.5H10.2M11.2 11.5H14M9 13.5H10.2M11.2 13.5H14" stroke="#3a3e49" stroke-width="1"/></svg>
<div class="box" style="left:330px;top:195px;width:280px"></div><span id="t41" class="t" style="left:332.8px;top:199.5px;font-size:12px;color:#000;letter-spacing:0.049px;">Get iProperty "<span class="q">Location</span>" from "<span class="q">(Current Document)</span>"</span>
<span id="t42" class="t" style="left:616.2px;top:200px;font-size:11px;color:#6e6e6e;letter-spacing:0.188px;">"Get iProperties" returns 1 Variable</span>
<svg style="left:293px;top:231px" width="9" height="9" viewBox="0 0 9 9" ><rect x="0.5" y="0.5" width="8" height="8" rx="1.2" fill="url(#gex)" stroke="#919191"/><path d="M2 4.5H7" stroke="#3c4ea0" stroke-width="1" shape-rendering="crispEdges"/></svg>
<svg style="left:311px;top:227px" width="16" height="16" viewBox="0 0 16 16" ><rect x="0.5" y="0.5" width="15" height="15" rx="0.6" fill="#fff" stroke="#3a3e49"/><path d="M0.5 1.2H15.5" stroke="#3a3e49" stroke-width="1.6"/><rect x="2.5" y="5.5" width="11" height="3" fill="#fff" stroke="#3a3e49"/><rect x="10" y="5.5" width="1" height="3" fill="#3a3e49"/><rect x="2.5" y="10.5" width="11" height="3" fill="#fff" stroke="#3a3e49"/><rect x="10" y="10.5" width="1" height="3" fill="#3a3e49"/></svg>
<div class="box" style="left:330px;top:223px;width:376px"></div><span id="t43" class="t" style="left:332.8px;top:227.5px;font-size:12px;color:#000;letter-spacing:-0.048px;">Ask for Multiple Values: "<span class="q">Into which CAD formats should be exported?</span>"</span>
<span id="t44" class="t" style="left:712.7px;top:228px;font-size:11px;color:#6e6e6e;letter-spacing:0.224px;">"Ask for Multiple Values" returns 4 Variables</span>
<svg style="left:315px;top:259px" width="9" height="9" viewBox="0 0 9 9" ><rect x="0.5" y="0.5" width="8" height="8" rx="1.2" fill="url(#gex)" stroke="#919191"/><path d="M2 4.5H7" stroke="#3c4ea0" stroke-width="1" shape-rendering="crispEdges"/></svg>
<svg style="left:334px;top:258px" width="12" height="11" viewBox="0 0 12 11" ><path d="M1 5H9.6M6.2 1.4L10.4 5L6.2 8.6" fill="none" stroke="#0a4f9e" stroke-width="2.4" stroke-linejoin="miter"/></svg>
<div class="badge" style="left:352px;top:253px;width:21px"></div><span id="t45" class="t" style="left:355.2px;top:255.5px;font-size:12px;color:#fff;letter-spacing:-0.922px;">OK</span>
<svg style="left:337px;top:287px" width="9" height="9" viewBox="0 0 9 9" ><rect x="0.5" y="0.5" width="8" height="8" rx="1.2" fill="url(#gex)" stroke="#919191"/><path d="M2 4.5H7" stroke="#3c4ea0" stroke-width="1" shape-rendering="crispEdges"/></svg>
<svg style="left:354px;top:282px" width="18" height="18" viewBox="0 0 18 18" ><g transform="translate(1 1)"><rect x="0.5" y="0.5" width="11" height="11" fill="#fff"/><rect x="2" y="4" width="4" height="6" fill="#e6e9ee"/><path d="M11.5 5.8V0.5H0.5V11Q0.5 11.5 1 11.5H5.8" fill="none" stroke="#3a3e49" stroke-width="1.1"/><rect x="0" y="0" width="12" height="2" fill="#3a3e49"/></g><g transform="translate(1 1)"><path d="M7.6 4V13.3H10.4M7.6 7.4H10.4" fill="none" stroke="#3a3e49" stroke-width="1.1"/><path d="M11.4 7.5L12.6 8.7L15 6.2" fill="none" stroke="#12a012" stroke-width="1.15"/><path d="M11.4 11.3L14.9 14.8M14.9 11.3L11.4 14.8" fill="none" stroke="#a80808" stroke-width="1.05"/><rect x="12.4" y="12.3" width="1.5" height="1.5" fill="#a80808"/></g></svg>
<div class="box" style="left:374px;top:279px;width:267px"></div><span id="t46" class="t" style="left:376.8px;top:283.5px;font-size:12px;color:#000;letter-spacing:-0.144px;">If "<span class="q">Ask for Multiple Values.STEP</span>" is equal to "<span class="q">True</span>"</span>
<svg style="left:359px;top:315px" width="9" height="9" viewBox="0 0 9 9" ><rect x="0.5" y="0.5" width="8" height="8" rx="1.2" fill="url(#gex)" stroke="#919191"/><path d="M2 4.5H7" stroke="#3c4ea0" stroke-width="1" shape-rendering="crispEdges"/></svg>
<svg style="left:377px;top:311px" width="16" height="16" viewBox="0 0 16 16" ><circle cx="8" cy="8" r="8" fill="#0a9f16"/><path d="M4.5 8.1L7 10.5L11.6 5.5" fill="none" stroke="#fff" stroke-width="2.1"/></svg>
<div class="badge" style="left:396px;top:309px;width:32px"></div><span id="t47" class="t" style="left:399.2px;top:311.5px;font-size:12px;color:#fff;letter-spacing:-0.648px;word-spacing:1.5px;">If yes</span>
<svg style="left:399px;top:339px" width="16" height="16" viewBox="0 0 16 16" ><path d="M1.5 3.5 L4.5 0.5 H14.5 Q15.5 0.5 15.5 1.5 V11.5 L12.5 14.5 H2.5 Q1.5 14.5 1.5 13.5 Z" fill="#fff"/><rect x="3" y="4" width="8.8" height="9.5" fill="url(#gbox)"/><path d="M13.2 4 L14.7 2.5 V11 L13.2 12.3 Z" fill="#a2a9b4"/><path d="M1.5 3.5 L4.5 0.5 H14.5 Q15.5 0.5 15.5 1.5 V11.5 L12.5 14.5 H2.5 Q1.5 14.5 1.5 13.5 Z" fill="none" stroke="#3a3e49" stroke-width="1" stroke-linejoin="round"/><path d="M6 10H11V8.1L15.5 11.5L11 14.9V13H6Z" fill="#0f7dff"/></svg>
<div class="box" style="left:418px;top:335px;width:435px"></div><span id="t48" class="t" style="left:420.8px;top:339.5px;font-size:12px;color:#000;letter-spacing:-0.009px;">Export "<span class="q">(Current Document)</span>" into "<span class="q">STP</span>" to "<span class="q">[Ask for Multiple Values.Destination:]</span>"</span>
<span id="t49" class="t" style="left:859.3px;top:340px;font-size:11px;color:#6e6e6e;letter-spacing:0.237px;">"Export Document" returns 1 Variable</span>
<svg style="left:337px;top:371px" width="9" height="9" viewBox="0 0 9 9" ><rect x="0.5" y="0.5" width="8" height="8" rx="1.2" fill="url(#gex)" stroke="#919191"/><path d="M2 4.5H7" stroke="#3c4ea0" stroke-width="1" shape-rendering="crispEdges"/></svg>
<svg style="left:354px;top:366px" width="18" height="18" viewBox="0 0 18 18" ><g transform="translate(1 1)"><rect x="0.5" y="0.5" width="11" height="11" fill="#fff"/><rect x="2" y="4" width="4" height="6" fill="#e6e9ee"/><path d="M11.5 5.8V0.5H0.5V11Q0.5 11.5 1 11.5H5.8" fill="none" stroke="#3a3e49" stroke-width="1.1"/><rect x="0" y="0" width="12" height="2" fill="#3a3e49"/></g><g transform="translate(1 1)"><path d="M7.6 4V13.3H10.4M7.6 7.4H10.4" fill="none" stroke="#3a3e49" stroke-width="1.1"/><path d="M11.4 7.5L12.6 8.7L15 6.2" fill="none" stroke="#12a012" stroke-width="1.15"/><path d="M11.4 11.3L14.9 14.8M14.9 11.3L11.4 14.8" fill="none" stroke="#a80808" stroke-width="1.05"/><rect x="12.4" y="12.3" width="1.5" height="1.5" fill="#a80808"/></g></svg>
<div class="box" style="left:374px;top:363px;width:289px"></div><span id="t50" class="t" style="left:376.8px;top:367.5px;font-size:12px;color:#000;letter-spacing:-0.073px;">If "<span class="q">Ask for Multiple Values.Parasolid</span>" is equal to "<span class="q">True</span>"</span>
<svg style="left:359px;top:399px" width="9" height="9" viewBox="0 0 9 9" ><rect x="0.5" y="0.5" width="8" height="8" rx="1.2" fill="url(#gex)" stroke="#919191"/><path d="M2 4.5H7" stroke="#3c4ea0" stroke-width="1" shape-rendering="crispEdges"/></svg>
<svg style="left:377px;top:395px" width="16" height="16" viewBox="0 0 16 16" ><circle cx="8" cy="8" r="8" fill="#0a9f16"/><path d="M4.5 8.1L7 10.5L11.6 5.5" fill="none" stroke="#fff" stroke-width="2.1"/></svg>
<div class="badge" style="left:396px;top:393px;width:32px"></div><span id="t51" class="t" style="left:399.2px;top:395.5px;font-size:12px;color:#fff;letter-spacing:-0.648px;word-spacing:1.5px;">If yes</span>
<svg style="left:399px;top:423px" width="16" height="16" viewBox="0 0 16 16" ><path d="M1.5 3.5 L4.5 0.5 H14.5 Q15.5 0.5 15.5 1.5 V11.5 L12.5 14.5 H2.5 Q1.5 14.5 1.5 13.5 Z" fill="#fff"/><rect x="3" y="4" width="8.8" height="9.5" fill="url(#gbox)"/><path d="M13.2 4 L14.7 2.5 V11 L13.2 12.3 Z" fill="#a2a9b4"/><path d="M1.5 3.5 L4.5 0.5 H14.5 Q15.5 0.5 15.5 1.5 V11.5 L12.5 14.5 H2.5 Q1.5 14.5 1.5 13.5 Z" fill="none" stroke="#3a3e49" stroke-width="1" stroke-linejoin="round"/><path d="M6 10H11V8.1L15.5 11.5L11 14.9V13H6Z" fill="#0f7dff"/></svg>
<div class="box" style="left:418px;top:419px;width:434px"></div><span id="t52" class="t" style="left:420.8px;top:423.5px;font-size:12px;color:#000;letter-spacing:-0.005px;">Export "<span class="q">(Current Document)</span>" into "<span class="q">X_T</span>" to "<span class="q">[Ask for Multiple Values.Destination:]</span>"</span>
<span id="t53" class="t" style="left:858.7px;top:424px;font-size:11px;color:#6e6e6e;letter-spacing:0.211px;">"Export Document1" returns 1 Variable</span>
<svg style="left:337px;top:455px" width="9" height="9" viewBox="0 0 9 9" ><rect x="0.5" y="0.5" width="8" height="8" rx="1.2" fill="url(#gex)" stroke="#919191"/><path d="M2 4.5H7" stroke="#3c4ea0" stroke-width="1" shape-rendering="crispEdges"/></svg>
<svg style="left:354px;top:450px" width="18" height="18" viewBox="0 0 18 18" ><g transform="translate(1 1)"><rect x="0.5" y="0.5" width="11" height="11" fill="#fff"/><rect x="2" y="4" width="4" height="6" fill="#e6e9ee"/><path d="M11.5 5.8V0.5H0.5V11Q0.5 11.5 1 11.5H5.8" fill="none" stroke="#3a3e49" stroke-width="1.1"/><rect x="0" y="0" width="12" height="2" fill="#3a3e49"/></g><g transform="translate(1 1)"><path d="M7.6 4V13.3H10.4M7.6 7.4H10.4" fill="none" stroke="#3a3e49" stroke-width="1.1"/><path d="M11.4 7.5L12.6 8.7L15 6.2" fill="none" stroke="#12a012" stroke-width="1.15"/><path d="M11.4 11.3L14.9 14.8M14.9 11.3L11.4 14.8" fill="none" stroke="#a80808" stroke-width="1.05"/><rect x="12.4" y="12.3" width="1.5" height="1.5" fill="#a80808"/></g></svg>
<div class="box" style="left:374px;top:447px;width:275px"></div><span id="t54" class="t" style="left:376.8px;top:451.5px;font-size:12px;color:#000;letter-spacing:-0.116px;">If "<span class="q">Ask for Multiple Values.PRO-E</span>" is equal to "<span class="q">True</span>"</span>
<svg style="left:359px;top:483px" width="9" height="9" viewBox="0 0 9 9" ><rect x="0.5" y="0.5" width="8" height="8" rx="1.2" fill="url(#gex)" stroke="#919191"/><path d="M2 4.5H7" stroke="#3c4ea0" stroke-width="1" shape-rendering="crispEdges"/></svg>
<svg style="left:377px;top:479px" width="16" height="16" viewBox="0 0 16 16" ><circle cx="8" cy="8" r="8" fill="#0a9f16"/><path d="M4.5 8.1L7 10.5L11.6 5.5" fill="none" stroke="#fff" stroke-width="2.1"/></svg>
<div class="badge" style="left:396px;top:477px;width:32px"></div><span id="t55" class="t" style="left:399.2px;top:479.5px;font-size:12px;color:#fff;letter-spacing:-0.648px;word-spacing:1.5px;">If yes</span>
<svg style="left:399px;top:507px" width="16" height="16" viewBox="0 0 16 16" ><path d="M1.5 3.5 L4.5 0.5 H14.5 Q15.5 0.5 15.5 1.5 V11.5 L12.5 14.5 H2.5 Q1.5 14.5 1.5 13.5 Z" fill="#fff"/><rect x="3" y="4" width="8.8" height="9.5" fill="url(#gbox)"/><path d="M13.2 4 L14.7 2.5 V11 L13.2 12.3 Z" fill="#a2a9b4"/><path d="M1.5 3.5 L4.5 0.5 H14.5 Q15.5 0.5 15.5 1.5 V11.5 L12.5 14.5 H2.5 Q1.5 14.5 1.5 13.5 Z" fill="none" stroke="#3a3e49" stroke-width="1" stroke-linejoin="round"/><path d="M6 10H11V8.1L15.5 11.5L11 14.9V13H6Z" fill="#0f7dff"/></svg>
<div class="box" style="left:418px;top:503px;width:443px"></div><span id="t56" class="t" style="left:420.8px;top:507.5px;font-size:12px;color:#000;letter-spacing:0.008px;">Export "<span class="q">(Current Document)</span>" into "<span class="q">NEU*</span>" to "<span class="q">[Ask for Multiple Values.Destination:]</span>"</span>
<span id="t57" class="t" style="left:867.5px;top:508px;font-size:11px;color:#6e6e6e;letter-spacing:0.211px;">"Export Document2" returns 1 Variable</span>
</div></div>
<div class="a" style="left:1px;top:651px;width:1004px;height:26px;background:#0066cc"></div>
<span id="t58" class="t" style="left:8.4px;top:656px;font-size:12px;color:#fff;letter-spacing:-0.237px;">Pro-Version</span>
<svg style="left:759px;top:656px" width="12" height="15" viewBox="0 0 12 15" ><rect x="0" y="8" width="12" height="7" fill="#fff"/><path d="M2.9 4.4V3.9A3.05 3.05 0 0 1 9 3.9V8.5" fill="none" stroke="#fff" stroke-width="1.7"/></svg>
<span id="t59" class="t" style="left:776.7px;top:656px;font-size:12px;color:#fff;letter-spacing:0.052px;">Protect Workflow</span>
<svg style="left:880px;top:655px" width="12" height="18" viewBox="0 0 12 18" ><path d="M3.6 12V10.7Q1.2 8.7 1.2 5.9A4.8 4.8 0 0 1 10.8 5.9Q10.8 8.7 8.4 10.7V12Z" fill="none" stroke="#fff" stroke-width="1.15"/><path d="M3.4 14.5H8.6M4.6 16.5H7.4" stroke="#fff" stroke-width="1.1"/><path d="M4.7 11.6L3.9 6.2L5.3 7.6L6 9.4L6.7 7.6L8.1 6.2L7.3 11.6Z" fill="#fff" opacity=".8"/></svg>
<span id="t60" class="t" style="left:897.6px;top:656px;font-size:12px;color:#fff;letter-spacing:-0.395px;">Give Feedback...</span>
<svg style="left:992px;top:664px" width="11" height="11" viewBox="0 0 11 11" ><rect x="8" y="0" width="2" height="2" fill="#c4a27c"/><rect x="9" y="1" width="2" height="2" fill="#fff"/><rect x="4" y="4" width="2" height="2" fill="#c4a27c"/><rect x="5" y="5" width="2" height="2" fill="#fff"/><rect x="8" y="4" width="2" height="2" fill="#c4a27c"/><rect x="9" y="5" width="2" height="2" fill="#fff"/><rect x="0" y="8" width="2" height="2" fill="#c4a27c"/><rect x="1" y="9" width="2" height="2" fill="#fff"/><rect x="4" y="8" width="2" height="2" fill="#c4a27c"/><rect x="5" y="9" width="2" height="2" fill="#fff"/><rect x="8" y="8" width="2" height="2" fill="#c4a27c"/><rect x="9" y="9" width="2" height="2" fill="#fff"/></svg>
</body></html>
